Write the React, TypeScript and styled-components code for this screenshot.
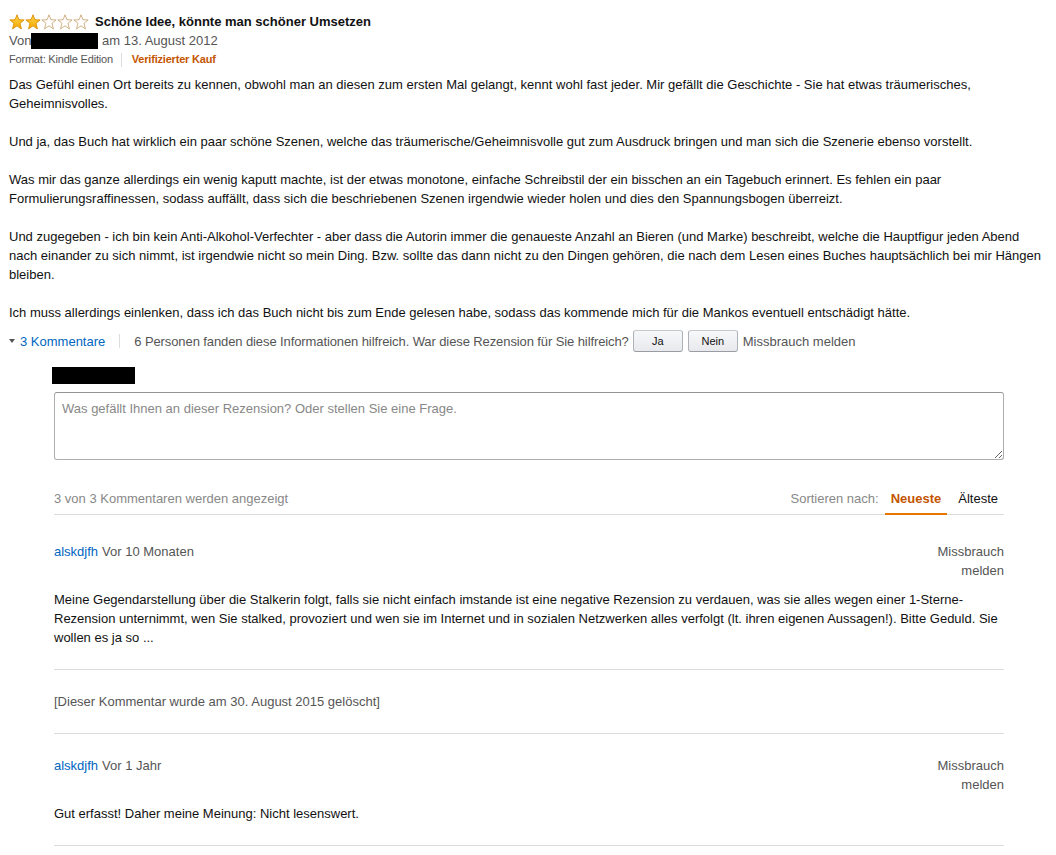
import React from "react";
import styled, { createGlobalStyle } from "styled-components";

const GlobalStyle = createGlobalStyle`
  html, body { margin: 0; padding: 0; background: #fff; }
  body { font-family: "Liberation Sans", Arial, sans-serif; font-size: 13px; color: #111; }
  * { box-sizing: border-box; }
`;

const Page = styled.div`
  padding: 12px 8px 0 9px;
  width: 1056px;
`;

const TitleRow = styled.div`
  display: flex;
  align-items: center;
  gap: 6px;
  height: 19px;
`;

const Stars = styled.div`
  display: flex;
  align-items: center;
  gap: 0;
`;

const Title = styled.span`
  font-weight: bold;
  font-size: 13px;
  color: #111;
  line-height: 19px;
`;

const Byline = styled.div`
  display: flex;
  align-items: center;
  color: #555;
  line-height: 19px;
  height: 19px;
`;

const Redacted = styled.span<{ $w: number; $h: number }>`
  display: inline-block;
  background: #000;
  width: ${(p) => p.$w}px;
  height: ${(p) => p.$h}px;
`;

const Meta = styled.div`
  display: flex;
  align-items: center;
  font-size: 11px;
  line-height: 19px;
  color: #555;
  letter-spacing: -0.2px;
`;

const MetaSep = styled.span`
  width: 1px;
  height: 14px;
  background: #ddd;
  margin: 0 10px 0 8px;
`;

const Verified = styled.span`
  color: #c45500;
  font-weight: bold;
`;

const Body = styled.div`
  margin-top: 6px;
  line-height: 19px;
  color: #111;
  p { margin: 0 0 19px; }
  p:last-child { margin-bottom: 0; }
`;

const ActionRow = styled.div`
  display: flex;
  align-items: center;
  height: 24px;
  margin-top: 7px;
  color: #555;
  white-space: nowrap;
`;

const Caret = styled.span`
  width: 0;
  height: 0;
  border-left: 3.5px solid transparent;
  border-right: 3.5px solid transparent;
  border-top: 4px solid #555;
  margin: 0 5px 0 0;
`;

const Link = styled.a`
  color: #0066c0;
  text-decoration: none;
`;

const VSep = styled.span`
  width: 1px;
  height: 14px;
  background: #ddd;
  margin: 0 14px;
`;

const Helpful = styled.span`
  letter-spacing: -0.1px;
`;

const Btn = styled.button`
  width: 50px;
  height: 22px;
  margin-left: 5px;
  border: 1px solid #adb1b8;
  border-top-color: #c6c8cc;
  border-bottom-color: #999da3;
  border-radius: 3px;
  background: linear-gradient(#f7f8fa, #e7e9ec);
  font-family: "Liberation Sans", Arial, sans-serif;
  font-size: 11px;
  color: #111;
  padding: 0;
  &:first-of-type { margin-left: 4px; }
`;

const Report = styled.span`
  margin-left: 5px;
  color: #555;
`;

const CommentsSection = styled.div`
  margin: 14px 44px 0 45px;
`;

const AuthorBox = styled.div`
  margin-left: -2px;
  height: 17px;
  display: flex;
`;

const Reply = styled.textarea`
  display: block;
  width: 950px;
  height: 68px;
  margin-top: 8px;
  border: 1px solid #adadad;
  border-top-color: #949494;
  border-radius: 3px;
  padding: 7px 7px;
  font-family: "Liberation Sans", Arial, sans-serif;
  font-size: 13px;
  line-height: 17px;
  color: #111;
  resize: vertical;
  &::placeholder { color: #888; }
`;

const ListHeader = styled.div`
  display: flex;
  align-items: stretch;
  justify-content: space-between;
  margin-top: 24px;
  height: 31px;
  border-bottom: 1px solid #ddd;
  margin-bottom: 5px;
`;

const Count = styled.div`
  color: #888;
  line-height: 30px;
`;

const Sort = styled.div`
  display: flex;
  align-items: stretch;
`;

const SortLabel = styled.span`
  color: #888;
  line-height: 30px;
  margin-right: 6px;
`;

const Tab = styled.span<{ $active?: boolean }>`
  line-height: 30px;
  padding: 0 6px;
  margin-bottom: -1px;
  border-bottom: 2px solid ${(p) => (p.$active ? "#e77600" : "transparent")};
  color: ${(p) => (p.$active ? "#c45500" : "#111")};
  font-weight: ${(p) => (p.$active ? "bold" : "normal")};
  & + & { margin-left: 5px; }
`;

const Comment = styled.div`
  padding: 22px 0 22px;
  border-bottom: 1px solid #ddd;
  line-height: 19px;
`;

const CommentHead = styled.div`
  display: flex;
  justify-content: space-between;
  align-items: flex-start;
`;

const Who = styled.div`
  color: #555;
  a { margin-right: 4px; }
`;

const Abuse = styled.div`
  width: 70px;
  text-align: right;
  color: #555;
`;

const CommentText = styled.div`
  margin-top: 10px;
  color: #111;
`;

const Deleted = styled.div`
  color: #555;
`;

const Star: React.FC<{ filled: boolean }> = ({ filled }) => (
  <svg width="16" height="16" viewBox="0 0 16 16">
    <defs>
      <linearGradient id="sg" x1="0" y1="0" x2="0" y2="1">
        <stop offset="0" stopColor="#ffd54a" />
        <stop offset="1" stopColor="#f2a900" />
      </linearGradient>
    </defs>
    <polygon
      points="8,0.8 9.88,5.71 15.13,5.98 11.04,9.29 12.41,14.9 8,11.8 3.59,14.9 4.96,9.29 0.87,5.98 6.12,5.71"
      fill={filled ? "url(#sg)" : "#fff"}
      stroke={filled ? "#d98c00" : "#c9a877"}
      strokeWidth="0.9"
      strokeLinejoin="round"
    />
  </svg>
);

const comments = [
  {
    author: "alskdjfh",
    when: "Vor 10 Monaten",
    text:
      "Meine Gegendarstellung über die Stalkerin folgt, falls sie nicht einfach imstande ist eine negative Rezension zu verdauen, was sie alles wegen einer 1-Sterne-Rezension unternimmt, wen Sie stalked, provoziert und wen sie im Internet und in sozialen Netzwerken alles verfolgt (lt. ihren eigenen Aussagen!). Bitte Geduld. Sie wollen es ja so ...",
  },
  { deleted: "[Dieser Kommentar wurde am 30. August 2015 gelöscht]" },
  {
    author: "alskdjfh",
    when: "Vor 1 Jahr",
    text: "Gut erfasst! Daher meine Meinung: Nicht lesenswert.",
  },
];

export default function App() {
  return (
    <Page>
      <GlobalStyle />
      <TitleRow>
        <Stars>
          {[0, 1, 2, 3, 4].map((i) => (
            <Star key={i} filled={i < 2} />
          ))}
        </Stars>
        <Title>Schöne Idee, könnte man schöner Umsetzen</Title>
      </TitleRow>
      <Byline>
        Von
        <Redacted $w={67} $h={16} />
        &nbsp;am 13. August 2012
      </Byline>
      <Meta>
        Format: Kindle Edition
        <MetaSep />
        <Verified>Verifizierter Kauf</Verified>
      </Meta>
      <Body>
        <p>
          Das Gefühl einen Ort bereits zu kennen, obwohl man an diesen zum ersten Mal gelangt, kennt wohl fast jeder. Mir gefällt die Geschichte - Sie hat etwas träumerisches, Geheimnisvolles.
        </p>
        <p>
          Und ja, das Buch hat wirklich ein paar schöne Szenen, welche das träumerische/Geheimnisvolle gut zum Ausdruck bringen und man sich die Szenerie ebenso vorstellt.
        </p>
        <p>
          Was mir das ganze allerdings ein wenig kaputt machte, ist der etwas monotone, einfache Schreibstil der ein bisschen an ein Tagebuch erinnert. Es fehlen ein paar Formulierungsraffinessen, sodass auffällt, dass sich die beschriebenen Szenen irgendwie wieder holen und dies den Spannungsbogen überreizt.
        </p>
        <p>
          Und zugegeben - ich bin kein Anti-Alkohol-Verfechter - aber dass die Autorin immer die genaueste Anzahl an Bieren (und Marke) beschreibt, welche die Hauptfigur jeden Abend nach einander zu sich nimmt, ist irgendwie nicht so mein Ding. Bzw. sollte das dann nicht zu den Dingen gehören, die nach dem Lesen eines Buches hauptsächlich bei mir Hängen bleiben.
        </p>
        <p>
          Ich muss allerdings einlenken, dass ich das Buch nicht bis zum Ende gelesen habe, sodass das kommende mich für die Mankos eventuell entschädigt hätte.
        </p>
      </Body>
      <ActionRow>
        <Caret />
        <Link href="#">3 Kommentare</Link>
        <VSep />
        <Helpful>
          6 Personen fanden diese Informationen hilfreich. War diese Rezension für Sie hilfreich?
        </Helpful>
        <Btn>Ja</Btn>
        <Btn>Nein</Btn>
        <Report>Missbrauch melden</Report>
      </ActionRow>
      <CommentsSection>
        <AuthorBox>
          <Redacted $w={83} $h={17} />
        </AuthorBox>
        <Reply placeholder="Was gefällt Ihnen an dieser Rezension? Oder stellen Sie eine Frage." />
        <ListHeader>
          <Count>3 von 3 Kommentaren werden angezeigt</Count>
          <Sort>
            <SortLabel>Sortieren nach:</SortLabel>
            <Tab $active>Neueste</Tab>
            <Tab>Älteste</Tab>
          </Sort>
        </ListHeader>
        {comments.map((c, i) => (
          <Comment key={i}>
            {c.deleted ? (
              <Deleted>{c.deleted}</Deleted>
            ) : (
              <>
                <CommentHead>
                  <Who>
                    <Link href="#">{c.author}</Link>
                    {c.when}
                  </Who>
                  <Abuse>Missbrauch melden</Abuse>
                </CommentHead>
                <CommentText>{c.text}</CommentText>
              </>
            )}
          </Comment>
        ))}
      </CommentsSection>
    </Page>
  );
}
